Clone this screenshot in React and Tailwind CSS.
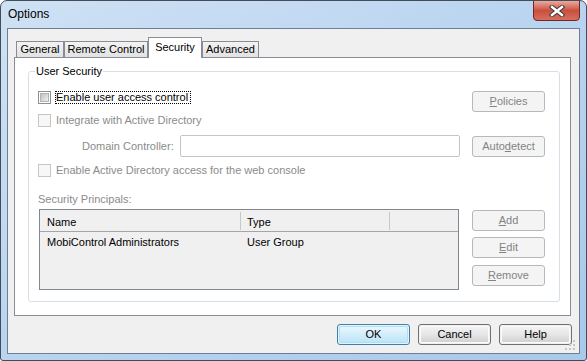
import React from "react";

function Check({ enabled }) {
  if (enabled) {
    return (
      <span className="flex w-[13px] h-[13px] shrink-0 border border-[#8e8f8f] bg-white p-[1px]">
        <span className="flex-1 border border-[#b0b4b9] bg-gradient-to-br from-[#bcc0c5] to-[#f0f0f0]" />
      </span>
    );
  }
  return <span className="block w-[13px] h-[13px] shrink-0 border border-[#c6c6c6] bg-[#f7f7f7]" />;
}

function DBtn({ children }) {
  return (
    <div className="w-[73px] h-[21px] shrink-0 rounded-[3px] border border-[#b5b9bc] bg-[#f4f4f4] text-[#838383] flex items-center justify-center">
      <span>{children}</span>
    </div>
  );
}

function Btn({ children, primary }) {
  if (primary) {
    return (
      <div className="w-[73px] h-[21px] rounded-[3px] border border-[#3c7fb1] p-px">
        <div className="h-full rounded-[2px] border border-[#a9e2f7] bg-gradient-to-b from-[#e8f6fd] via-[#d3eefb] to-[#bde5f8] flex items-center justify-center">
          OK
        </div>
      </div>
    );
  }
  return (
    <div className="w-[73px] h-[21px] rounded-[3px] border border-[#707070] p-px">
      <div className="h-full rounded-[2px] border border-[#fbfbfb] bg-gradient-to-b from-[#f2f2f2] via-[#e6e6e6] to-[#d2d2d2] flex items-center justify-center">
        {children}
      </div>
    </div>
  );
}

export default function App() {
  return (
    <div className="w-[587px] h-[361px] font-['Liberation_Sans',Arial,sans-serif] text-[11px] leading-[13px] text-black">
      <div className="w-full h-full flex flex-col rounded-t-[7px] rounded-b-[3px] border border-[#434d5a] bg-gradient-to-br from-[#cfe1f4] via-[#b9d4f0] to-[#a9c9eb] overflow-hidden">
        {/* title bar */}
        <div className="h-[27px] shrink-0 flex items-start justify-between">
          <span className="ml-[7px] mt-[6px] text-[12px] leading-[15px] text-black">Options</span>
          <div className="mr-[6px] -mt-px w-[47px] h-[21px] rounded-b-[4px] border border-[#6d2a22] bg-gradient-to-b from-[#e9a99f] via-[#c9503f] to-[#d86d5c] flex items-center justify-center">
            <svg width="16" height="12" viewBox="0 0 16 12">
              <path d="M3 2 L13 10 M13 2 L3 10" stroke="#3d3d3d" strokeWidth="4.4" strokeLinecap="square" />
              <path d="M3 2 L13 10 M13 2 L3 10" stroke="#ffffff" strokeWidth="2.4" strokeLinecap="square" />
            </svg>
          </div>
        </div>

        {/* client */}
        <div className="relative flex-1 mx-[6px] mb-[6px] border border-[#6f7f93] bg-[#f0f0f0] flex flex-col">
          {/* tabs */}
          <div className="flex items-end h-[20px] ml-[8px] mt-[8px]">
            <div className="w-[48px] h-[16px] border border-b-0 border-[#898c95] bg-gradient-to-b from-[#f3f3f3] to-[#e2e2e2] flex items-center justify-center">
              General
            </div>
            <div className="w-[84px] h-[16px] border border-b-0 border-[#898c95] bg-gradient-to-b from-[#f3f3f3] to-[#e2e2e2] flex items-center justify-center">
              Remote Control
            </div>
            <div className="relative z-10 -mb-px w-[54px] h-[21px] border border-b-0 border-[#898c95] bg-white flex items-start justify-center pt-[3px]">
              Security
            </div>
            <div className="w-[57px] h-[16px] border border-b-0 border-[#898c95] bg-gradient-to-b from-[#f3f3f3] to-[#e2e2e2] flex items-center justify-center">
              Advanced
            </div>
          </div>

          {/* tab panel */}
          <div className="ml-[6px] mr-[8px] h-[259px] shrink-0 border border-[#898c95] bg-white pt-[13px] pl-[13px] pr-[10px] pb-[13px] flex">
            <div className="relative flex-1 border border-[#d5dfe5] rounded-[3px] pt-[19px] pl-[9px] pr-[14px] flex flex-col">
              <span className="absolute left-[6px] top-[-7px] bg-white px-px">User Security</span>

              {/* row A */}
              <div className="flex items-start justify-between h-[21px]">
                <div className="flex items-start">
                  <Check enabled />
                  <span className="ml-[4px] h-[13px] border border-dotted border-black pr-[2px] leading-[11px]">
                    Enable user access control
                  </span>
                </div>
                <DBtn>
                  <span className="underline underline-offset-[1px]">P</span>olicies
                </DBtn>
              </div>

              {/* row B */}
              <div className="mt-[2px] flex items-start h-[13px]">
                <Check />
                <span className="ml-[5px] text-[#8b8b8b]">Integrate with Active Directory</span>
              </div>

              {/* row C */}
              <div className="mt-[8px] flex items-center h-[22px]">
                <span className="ml-[44px] w-[98px] text-[#8b8b8b]">Domain Controller:</span>
                <div className="w-[280px] h-[22px] border border-[#c2c5c9] rounded-[2px] bg-white" />
                <div className="flex-1" />
                <DBtn>
                  Auto<span className="underline underline-offset-[1px]">d</span>etect
                </DBtn>
              </div>

              {/* row D */}
              <div className="mt-[7px] flex items-start h-[13px]">
                <Check />
                <span className="ml-[5px] text-[#8b8b8b]">Enable Active Directory access for the web console</span>
              </div>

              <div className="mt-[16px] h-[13px] text-[#8b8b8b]">Security Principals:</div>

              {/* list row */}
              <div className="mt-[3px] flex items-start justify-between">
                <div className="ml-px w-[420px] h-[81px] border border-[#828790] bg-[#f0f0f0] flex flex-col">
                  <div className="h-[22px] border-b border-[#a5a5a5] flex items-center">
                    <div className="w-[201px] h-[18px] border-r border-[#c8c8c8] pl-[7px] pt-[4px] leading-[13px]">Name</div>
                    <div className="w-[149px] h-[18px] border-r border-[#c8c8c8] pl-[6px] pt-[4px] leading-[13px]">Type</div>
                  </div>
                  <div className="flex pt-[4px]">
                    <div className="w-[201px] pl-[7px]">MobiControl Administrators</div>
                    <div className="pl-[6px]">User Group</div>
                  </div>
                </div>
                <div className="flex flex-col pt-px">
                  <DBtn>
                    <span className="underline underline-offset-[1px]">A</span>dd
                  </DBtn>
                  <div className="mt-[6px]">
                    <DBtn>
                      <span className="underline underline-offset-[1px]">E</span>dit
                    </DBtn>
                  </div>
                  <div className="mt-[7px]">
                    <DBtn>
                      <span className="underline underline-offset-[1px]">R</span>emove
                    </DBtn>
                  </div>
                </div>
              </div>
            </div>
          </div>

          {/* bottom buttons */}
          <div className="mt-[8px] flex justify-end gap-[8px] pr-[7px]">
            <Btn primary>OK</Btn>
            <Btn>Cancel</Btn>
            <Btn>Help</Btn>
          </div>

          {/* resize grip */}
          <svg className="absolute right-[3px] bottom-[2px]" width="11" height="11" viewBox="0 0 11 11">
            <rect x="8" y="0" width="2" height="2" fill="#c5c5c5" />
            <rect x="4" y="4" width="2" height="2" fill="#c5c5c5" />
            <rect x="8" y="4" width="2" height="2" fill="#c5c5c5" />
            <rect x="0" y="8" width="2" height="2" fill="#c5c5c5" />
            <rect x="4" y="8" width="2" height="2" fill="#c5c5c5" />
            <rect x="8" y="8" width="2" height="2" fill="#c5c5c5" />
          </svg>
        </div>
      </div>
    </div>
  );
}
